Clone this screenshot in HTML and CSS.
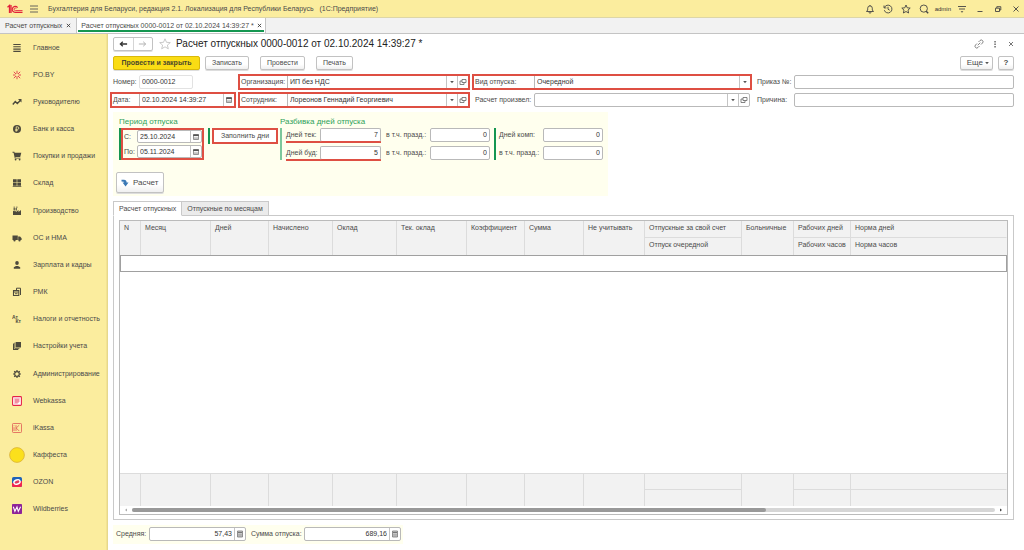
FILE: index.html
```html
<!DOCTYPE html>
<html lang="ru">
<head>
<meta charset="utf-8">
<title>Расчет отпускных</title>
<link rel="stylesheet" href="styles.css">
</head>
<body>
<svg class="sprite" aria-hidden="true">
  <symbol id="i-cal" viewBox="0 0 8 8"><path d="M1.500 2h5v4.500h-5z" fill="none" stroke="#777" stroke-width=".8"/><path d="M1.200 1.200h5.600v1.800H1.200z" fill="#555"/><path d="M2 4.300h4M2 5.500h4" stroke="#999" stroke-width=".6"/></symbol>
  <symbol id="i-open" viewBox="0 0 8 8"><path d="M3 1.500h4v3H3zM3 3H1v3.500h4v-2" fill="none" stroke="#666" stroke-width=".8"/></symbol>
  <symbol id="i-down" viewBox="0 0 8 8"><path d="M2.200 3h3.600L4 5.200z" fill="#555"/></symbol>
  <symbol id="i-calc" viewBox="0 0 8 8"><path d="M1.500 1h5v6h-5z" fill="#ccc" stroke="#777" stroke-width=".8"/><path d="M2 2.500h4" stroke="#777"/><path d="M2.500 4.400h3M2.500 5.800h3" stroke="#777" stroke-width=".7" stroke-dasharray=".8 .4"/></symbol>
</svg>

<header class="titlebar">
  <svg class="logo" viewBox="0 0 16 10" fill="none" stroke="#e2223a"><path d="M.5 3.200 2.500 1.500v7.500M4 1v8" stroke-width="1.300"/><path d="M10.600 3.600A3 3 0 1 0 8.500 8.400H15.500" stroke-width="1.200"/><path d="M9.300 4.400A1.300 1.300 0 1 0 8.500 6.600H15.500" stroke-width=".9"/></svg>
  <button class="icon-btn" aria-label="Меню"><svg viewBox="0 0 10 10" stroke="#555" stroke-width=".9"><path d="M1 2h8M1 5h8M1 8h8"/></svg></button>
  <span class="app-name">Бухгалтерия для Беларуси, редакция 2.1. Локализация для Республики Беларусь &nbsp; (1С:Предприятие)</span>
  <nav class="tools">
    <button class="icon-btn" aria-label="Уведомления"><svg viewBox="0 0 10 10" fill="none" stroke="#444" stroke-width=".9"><path d="M1.500 7.500h7L7.300 6V4.200a2.300 2.300 0 0 0-4.600 0V6zM5 1v1M4 8.200a1 1 0 0 0 2 0"/></svg></button>
    <button class="icon-btn" aria-label="История"><svg viewBox="0 0 10 10" fill="none" stroke="#444" stroke-width=".9"><path d="M1.400 3.600A3.900 3.900 0 1 1 1.300 6.200M1 1.500v2.400h2.400M5 2.800v2.400l1.700 1"/></svg></button>
    <button class="icon-btn" aria-label="Избранное"><svg viewBox="0 0 10 10" fill="none" stroke="#444" stroke-width=".9"><path d="m5 1 1.200 2.800 3 .3L7 6.100 7.600 9 5 7.500 2.400 9 3 6.100.8 4.100l3-.3z"/></svg></button>
    <button class="icon-btn" aria-label="Поиск"><svg viewBox="0 0 10 10" fill="none" stroke="#444" stroke-width=".9"><circle cx="4.800" cy="4.600" r="3.600"/><path d="m7.200 7.200 2 2" stroke-width="1.400"/></svg></button>
    <span class="user">admin</span>
    <button class="icon-btn" aria-label="Настройки"><svg viewBox="0 0 10 10" stroke="#444" stroke-width=".9"><path d="M1 2.500h8M2 5h6"/><path d="M3.600 7.200h2.800L5 8.700z" fill="#444" stroke="none"/></svg></button>
    <button class="icon-btn" aria-label="Свернуть"><svg viewBox="0 0 10 10" stroke="#444" stroke-width=".9"><path d="M2.500 7.500h5"/></svg></button>
    <button class="icon-btn" aria-label="Развернуть"><svg viewBox="0 0 10 10" fill="none" stroke="#444" stroke-width=".9"><path d="M2.500 4.200h4v3.300h-4zM3.800 4V2.700h4v3.300H6.500"/></svg></button>
    <button class="icon-btn" aria-label="Закрыть"><svg viewBox="0 0 10 10" stroke="#444" stroke-width=".9"><path d="m2.500 2.500 5 5M7.500 2.500l-5 5"/></svg></button>
  </nav>
</header>

<nav class="windows">
  <a class="window-tab" href="#">Расчет отпускных <svg viewBox="0 0 6 6"><path d="m1 1 4 4M5 1 1 5"/></svg></a>
  <a class="window-tab current" href="#">Расчет отпускных 0000-0012 от 02.10.2024 14:39:27 * <svg viewBox="0 0 6 6"><path d="m1 1 4 4M5 1 1 5"/></svg></a>
</nav>

<div class="workspace">
  <nav class="sidebar">
    <a href="#"><svg viewBox="0 0 10 10" stroke="#4d4a3c" stroke-width="1.100"><path d="M1.300 1.500h7.400M1.300 3.800h7.400M1.300 6.100h7.400M1.300 8.400h7.400"/></svg>Главное</a>
    <a href="#"><svg viewBox="0 0 10 10" stroke="#e0354a" stroke-width=".9"><path d="M5 .8v3M5 6.200v3M1 5h2.500M6.500 5H9M1.800 1.800l2.200 2.200M8.200 1.800 6 4M1.800 8.200 4 6M8.200 8.200 6 6"/></svg>PO.BY</a>
    <a href="#"><svg viewBox="0 0 10 10" fill="none" stroke="#4d4a3c" stroke-width="1.400"><path d="m.8 7.500 2.500-3 2 2 3-3"/><path d="M6 2h3.500v3.500z" fill="#4d4a3c" stroke="none"/></svg>Руководителю</a>
    <a href="#"><svg viewBox="0 0 10 10"><circle cx="5" cy="5" r="4" fill="#4d4a3c"/><path d="M4.200 7.700V2.800h1.300a1.300 1.300 0 0 1 0 2.600H3.300M3.300 6.600h2.400" fill="none" stroke="#fbed9e" stroke-width=".8"/></svg>Банк и касса</a>
    <a href="#"><svg viewBox="0 0 10 10" fill="#4d4a3c"><path d="M.5.800h1.800l.4 1h6.600L8.200 6H3.300l.2.700h5v.8H2.800L1.600 1.700H.5z"/><circle cx="3.600" cy="8.600" r=".9"/><circle cx="7.600" cy="8.600" r=".9"/></svg>Покупки и продажи</a>
    <a href="#"><svg viewBox="0 0 10 10" fill="#4d4a3c"><path d="M1 1.300h3.700v3.200H1zM5.300 1.300H9v3.200H5.300zM1 5.100h3.700v2.700H1zM5.300 5.100H9v2.700H5.300zM.7 8.200h8.600V9H.7z"/></svg>Склад</a>
    <a href="#"><svg viewBox="0 0 10 10" fill="#4d4a3c"><path d="M1 9V5l3 .2V6l2.500-2v2L9 4v5zM1.600 2h1.200v2.400H1.600zM3.600 2h1.200v2.400H3.600zM1.500.7h1.600v.7H1.500zM4 .7h1.600v.7H4z"/></svg>Производство</a>
    <a href="#"><svg viewBox="0 0 10 10" fill="#4d4a3c"><path d="M.5 2.500h5.300v4.600H.5zM6.200 3.500h1.900L9.600 5.200v1.900H6.200z"/><circle cx="2.500" cy="7.500" r="1.100"/><circle cx="7.500" cy="7.500" r="1.100"/></svg>ОС и НМА</a>
    <a href="#"><svg viewBox="0 0 10 10" fill="#4d4a3c"><ellipse cx="5" cy="3" rx="1.800" ry="2.100"/><path d="M1.800 8.800V7.200L4 6h2l2.200 1.200v1.600z"/></svg>Зарплата и кадры</a>
    <a href="#"><svg viewBox="0 0 10 10" fill="none" stroke="#4d4a3c"><path d="M1.500 3.500h5.300v5H1.500z" stroke-width="1.100"/><path d="M4.500 3V1.200h4V8M1.500 5h5" stroke-width="1"/><path d="M3 6.700h2.500" stroke-width=".9"/></svg>РМК</a>
    <a href="#"><svg viewBox="0 0 10 10"><text x="0" y="4.500" class="mini">Ат</text><text x="3.500" y="9" class="mini">Кт</text></svg>Налоги и отчетность</a>
    <a href="#"><svg viewBox="0 0 10 10" fill="#4d4a3c"><path d="M1 2.800 2 2.300V8h4.500l-.4 1H1zM2.400 1.800l.8-.4V7h4.400l-.4.800H2.400zM3.700 1H9v5.500H3.700z"/></svg>Настройки учета</a>
    <a href="#"><svg viewBox="0 0 10 10" fill="none" stroke="#4d4a3c"><circle cx="5" cy="5" r="2.300" stroke-width="1.200"/><path d="M5 1v1.500M5 7.500V9M1 5h1.500M7.500 5H9M2.200 2.200l1 1M6.800 6.800l1 1M7.800 2.200l-1 1M3.200 6.800l-1 1" stroke-width="1.200"/></svg>Администрирование</a>
    <a href="#"><svg viewBox="0 0 10 10" fill="none" stroke="#e52348"><rect x=".6" y=".6" width="8.800" height="8.800" rx=".8" fill="#fff" stroke-width="1.100"/><path d="M2.200 3h5.600M2.200 5h5.600M2.200 7h3.600M4 3v4M6 3v4" stroke-width=".6"/></svg>Webkassa</a>
    <a href="#"><svg viewBox="0 0 10 10" fill="none" stroke="#df5a55" stroke-width=".8"><rect x=".5" y=".5" width="9" height="9" rx=".8"/><path d="M2 4.200V8M2 2.400v.8M4 2.200V8M7.200 2.200 4.200 5l3 3"/></svg>iKassa</a>
    <a href="#"><svg class="round" viewBox="0 0 16 16"><circle cx="8" cy="8" r="7.400" fill="#fbe01c" stroke="#d9b13a" stroke-width=".8"/></svg>Каффеста</a>
    <a href="#"><svg viewBox="0 0 10 10"><rect width="10" height="10" rx="1.600" fill="#1f62b8"/><path d="M0 6 10 4v4.400A1.600 1.600 0 0 1 8.400 10H1.600A1.600 1.600 0 0 1 0 8.400z" fill="#f0254f"/><ellipse cx="5" cy="5" rx="3.200" ry="2.100" transform="rotate(-20 5 5)" fill="#e03c5f" stroke="#fff" stroke-width="1.400"/></svg>OZON</a>
    <a href="#"><svg viewBox="0 0 10 10"><rect width="10" height="10" rx=".8" fill="#8d2499"/><path d="m1.300 2.800 1.600 4.500L5 3l1.300 4.300 2.300-4.500" fill="none" stroke="#fff" stroke-width="1.100"/></svg>Wildberries</a>
  </nav>

  <main class="document">
    <div class="heading">
      <div class="history"><button aria-label="Назад"><svg viewBox="0 0 10 8"><path d="M9 4H1.500M4.200 1.500 1.500 4l2.700 2.500"/></svg></button><button class="off" aria-label="Вперед"><svg viewBox="0 0 10 8"><path d="M1 4h7.500M5.800 1.500 8.500 4 5.800 6.500"/></svg></button></div>
      <svg class="star" viewBox="0 0 12 12"><path d="m6 .8 1.500 3.500 3.800.3-2.900 2.500.9 3.700L6 8.800l-3.300 2 .9-3.700L.7 4.600l3.800-.3z"/></svg>
      <h1>Расчет отпускных 0000-0012 от 02.10.2024 14:39:27 *</h1>
      <div class="doc-tools">
        <button class="icon-btn" aria-label="Ссылка"><svg viewBox="0 0 10 10" fill="none" stroke="#777" stroke-width=".9"><path d="M4.500 3 6 1.500a1.700 1.700 0 0 1 2.500 2.500L7 5.500M5.500 7 4 8.500A1.700 1.700 0 0 1 1.500 6L3 4.500M3.700 6.300l2.600-2.600"/></svg></button>
        <button class="icon-btn" aria-label="Действия"><svg viewBox="0 0 10 10" fill="#555"><path d="M4.400 2h1.300v1.400H4.400zM4.400 4.500h1.300v1.400H4.400zM4.400 7h1.300v1.400H4.400z"/></svg></button>
        <button class="icon-btn" aria-label="Закрыть документ"><svg viewBox="0 0 10 10" stroke="#666" stroke-width=".9"><path d="m3 3 4 4M7 3 3 7"/></svg></button>
      </div>
    </div>

    <div class="commands">
      <button class="btn primary">Провести и закрыть</button>
      <button class="btn">Записать</button>
      <button class="btn spaced">Провести</button>
      <button class="btn spaced">Печать</button>
      <button class="btn more">Еще <svg class="glyph"><use href="#i-down"/></svg></button>
      <button class="btn help">?</button>
    </div>

    <div class="fields">
      <div class="field f1"><label for="num">Номер:</label><div class="box pale short"><input id="num" value="0000-0012"></div></div>
      <div class="field f2 marked"><label for="org">Организация:</label><div class="box"><select id="org"><option>ИП без НДС</option></select><span class="cell"><svg class="glyph"><use href="#i-down"/></svg></span><button class="cell" aria-label="Открыть"><svg class="glyph"><use href="#i-open"/></svg></button></div></div>
      <div class="field f3 marked"><label for="kind">Вид отпуска:</label><div class="box"><select id="kind"><option>Очередной</option></select><span class="cell"><svg class="glyph"><use href="#i-down"/></svg></span></div></div>
      <div class="field f4"><label for="order">Приказ №:</label><div class="box"><input id="order"></div></div>
      <div class="field f1 marked"><label for="date">Дата:</label><div class="box"><input id="date" value="02.10.2024 14:39:27"><button class="cell" aria-label="Календарь"><svg class="glyph"><use href="#i-cal"/></svg></button></div></div>
      <div class="field f2 marked"><label for="emp">Сотрудник:</label><div class="box"><select id="emp"><option>Лореонов Геннадий Георгиевич</option></select><span class="cell"><svg class="glyph"><use href="#i-down"/></svg></span><button class="cell" aria-label="Открыть"><svg class="glyph"><use href="#i-open"/></svg></button></div></div>
      <div class="field f3"><label for="by">Расчет произвел:</label><div class="box"><select id="by"><option></option></select><span class="cell"><svg class="glyph"><use href="#i-down"/></svg></span><button class="cell" aria-label="Открыть"><svg class="glyph"><use href="#i-open"/></svg></button></div></div>
      <div class="field f4"><label for="why">Причина:</label><div class="box"><input id="why"></div></div>
    </div>

    <section class="period">
      <div class="groups">
        <div class="group g-period">
          <h2>Период отпуска</h2>
          <div class="bar">
            <div class="dates">
              <div class="line"><label for="from">С:</label><div class="box"><input id="from" value="25.10.2024"><button class="cell" aria-label="Календарь"><svg class="glyph"><use href="#i-cal"/></svg></button></div></div>
              <div class="line"><label for="to">По:</label><div class="box"><input id="to" value="05.11.2024"><button class="cell" aria-label="Календарь"><svg class="glyph"><use href="#i-cal"/></svg></button></div></div>
            </div>
          </div>
        </div>
        <div class="group g-fill"><div class="bar"><button class="fill">Заполнить дни</button></div></div>
        <div class="group g-split">
          <h2>Разбивка дней отпуска</h2>
          <div class="bar light days">
            <div class="line n1 under"><label for="d1">Дней тек:</label><div class="box"><input class="num" id="d1" value="7"></div></div>
            <div class="line n2"><label for="d2">в т.ч. празд.:</label><div class="box"><input class="num" id="d2" value="0"></div></div>
            <div class="line n1 under"><label for="d3">Дней буд:</label><div class="box"><input class="num" id="d3" value="5"></div></div>
            <div class="line n2"><label for="d4">в т.ч. празд.:</label><div class="box"><input class="num" id="d4" value="0"></div></div>
          </div>
        </div>
        <div class="group g-comp">
          <div class="bar">
            <div class="line n2"><label for="d5">Дней комп:</label><div class="box"><input class="num" id="d5" value="0"></div></div>
            <div class="line n2"><label for="d6">в т.ч. празд.:</label><div class="box"><input class="num" id="d6" value="0"></div></div>
          </div>
        </div>
      </div>
      <button class="btn calc"><svg viewBox="0 0 8 8"><path d="M.5.800H3Q5.600.8 5.600 3.500H7.500L4.600 7.500 1.500 3.500H3.300Q3.300 2.400.5 2.400z" fill="#3a78b5"/></svg>Расчет</button>
    </section>

    <div class="tabs" role="tablist"><button class="tab active" role="tab">Расчет отпускных</button><button class="tab" role="tab">Отпускные по месяцам</button></div>
    <section class="pane">
      <div class="sheet">
        <table>
          <colgroup><col class="w-n"><col class="w-month"><col class="w-days"><col class="w-acc"><col class="w-acc"><col class="w-month"><col class="w-days"><col class="w-sum"><col class="w-skip"><col class="w-vac"><col class="w-sick"><col class="w-work"><col></colgroup>
          <thead>
            <tr><th rowspan="2">N</th><th rowspan="2">Месяц</th><th rowspan="2">Дней</th><th rowspan="2">Начислено</th><th rowspan="2">Оклад</th><th rowspan="2">Тек. оклад</th><th rowspan="2">Коэффициент</th><th rowspan="2">Сумма</th><th rowspan="2">Не учитывать</th><th>Отпускные за свой счет</th><th rowspan="2">Больничные</th><th>Рабочих дней</th><th>Норма дней</th></tr>
            <tr><th>Отпуск очередной</th><th>Рабочих часов</th><th>Норма часов</th></tr>
          </thead>
          <tbody><tr class="active-row"><td colspan="13"></td></tr></tbody>
        </table>
        <div class="empty"></div>
        <table class="totals">
          <colgroup><col class="w-n"><col class="w-month"><col class="w-days"><col class="w-acc"><col class="w-acc"><col class="w-month"><col class="w-days"><col class="w-sum"><col class="w-skip"><col class="w-vac"><col class="w-sick"><col class="w-work"><col></colgroup>
          <tbody>
            <tr><td rowspan="2"></td><td rowspan="2"></td><td rowspan="2"></td><td rowspan="2"></td><td rowspan="2"></td><td rowspan="2"></td><td rowspan="2"></td><td rowspan="2"></td><td rowspan="2"></td><td></td><td rowspan="2"></td><td></td><td></td></tr>
            <tr><td></td><td></td><td></td></tr>
          </tbody>
        </table>
        <div class="scroll"><svg viewBox="0 0 4 4" fill="#aaa"><path d="M3 .5v3L1 2z"/></svg><div class="track"><div class="thumb"></div></div><svg viewBox="0 0 4 4" fill="#444"><path d="M1 .5v3L3 2z"/></svg></div>
      </div>
    </section>

    <footer class="sums">
      <label for="avg">Средняя:</label><div class="box"><input class="num" id="avg" value="57,43"><button class="cell" aria-label="Калькулятор"><svg class="glyph"><use href="#i-calc"/></svg></button></div>
      <label for="total">Сумма отпуска:</label><div class="box"><input class="num" id="total" value="689,16"><button class="cell" aria-label="Калькулятор"><svg class="glyph"><use href="#i-calc"/></svg></button></div>
    </footer>
  </main>
</div>
</body>
</html>
```

FILE: styles.css
```css
* { box-sizing: border-box; }
html, body { height: 100%; }
body { margin: 0; display: flex; flex-direction: column; background: #fff; color: #4a4a4a; font: 7px/10px "Liberation Sans", Arial, sans-serif; }
button, input, select { font: inherit; color: inherit; margin: 0; padding: 0; border: 0; background: none; outline: 0; }
a { color: inherit; text-decoration: none; }
h1, h2 { margin: 0; font-weight: normal; }
.sprite { display: none; }
.glyph { width: 8px; height: 8px; display: block; }
.icon-btn { width: 10px; height: 10px; }
.icon-btn svg { display: block; width: 10px; height: 10px; }

.titlebar { flex: none; height: 17px; display: flex; align-items: center; padding: 0 3px 0 7px; background: #fbed9e; }
.logo { width: 16px; height: 10px; margin-right: 6px; }
.app-name { margin-left: 9px; flex: 1; white-space: nowrap; }
.tools { display: flex; align-items: center; gap: 8px; }
.user { font-size: 6px; margin: 0 -2px; color: #333; }

.windows { flex: none; height: 17px; display: flex; background: #f2f2f2; border-top: 1px solid #ddd6a8; border-bottom: 1px solid #c4c4c4; }
.window-tab { display: flex; align-items: center; gap: 4px; padding: 0 5px; border-right: 1px solid #c4c4c4; white-space: nowrap; }
.window-tab svg { width: 5px; height: 5px; stroke: #333; stroke-width: 1; }
.window-tab.current { gap: 3px; padding: 0 3px 0 4px; background: linear-gradient(#149650, #149650) 1px 12px / calc(100% - 2px) 2px no-repeat #fff; }

.workspace { flex: 1; display: flex; min-height: 0; }
.sidebar { flex: none; width: 108px; padding-bottom: 27px; display: grid; grid-auto-rows: 1fr; background: #fbed9e; border-right: 1px solid #e6d88c; box-shadow: inset -1px 0 #f3e394; }
.sidebar a { display: flex; align-items: center; gap: 11px; padding-left: 12px; white-space: nowrap; }
.sidebar svg { width: 10px; height: 10px; flex: none; }
.sidebar .round { width: 16px; height: 16px; margin: 0 -3px; }
.mini { font: bold 5px "Liberation Sans", Arial, sans-serif; fill: #4d4a3c; }

.document { flex: 1; min-width: 0; padding: 3px 8px 6px 2px; display: flex; flex-direction: column; }
.heading { display: flex; align-items: center; height: 14px; padding-left: 3px; }
.history { display: flex; width: 40px; height: 14px; border: 1px solid #c2c2c2; border-radius: 2px; box-shadow: 0 1px #ddd; }
.history button { flex: 1; display: grid; place-items: center; }
.history button + button { border-left: 1px solid #d5d5d5; }
.history svg { width: 9px; height: 8px; fill: none; stroke: #333; stroke-width: 1.4; }
.history .off svg { stroke: #aaa; stroke-width: 1; }
.star { width: 12px; height: 12px; margin: 0 5px 0 6px; fill: none; stroke: #bbb; stroke-width: .8; }
h1 { flex: 1; font-size: 10px; line-height: 14px; color: #222; white-space: nowrap; }
.doc-tools { display: flex; gap: 6px; }

.commands { display: flex; margin: 5px 2px 4px 3px; height: 14px; gap: 5px; }
.btn { border: 1px solid #c2c2c2; border-radius: 2px; background: linear-gradient(#fff 60%, #f0f0f0); box-shadow: 0 1px #ddd; line-height: 12px; padding: 0 6px; white-space: nowrap; }
.primary { width: 87px; background: #fadc14; border-color: #d9b90a; color: #4d492c; font-weight: bold; padding: 0; }
.spaced { margin-left: 6px; }
.more { display: flex; align-items: center; margin-left: auto; font-size: 8px; padding: 0 1px 0 6px; }
.help { font-size: 8px; font-weight: bold; width: 16px; padding: 0; }

.fields { display: grid; grid-template-columns: 126px 232fr 280fr 262fr; gap: 2px; }
.field { display: flex; align-items: stretch; height: 16px; border: 2px solid transparent; padding-left: 1px; min-width: 0; }
.field label { flex: none; line-height: 12px; white-space: nowrap; }
.f1 label { width: 26px; }
.f2 label { width: 46px; }
.f3 label { width: 59px; }
.f4 label { width: 37px; }
.box { flex: 1; min-width: 0; display: flex; height: 14px; border: 1px solid #b9b9b9; border-radius: 2px; background: #fff; }
.field .box { margin: -1px 0; }
.field.marked { border-color: #de4f43; }
.field.marked .box { height: 12px; margin: 0; border-width: 0 0 0 1px; border-radius: 0; }
.box input, .box select { flex: 1; min-width: 0; width: 0; padding: 0 2px; appearance: none; color: #333; }
.box.pale { border-color: #e2e2e2; }
.field .box.short { flex: none; width: 54px; }
.cell { flex: none; width: 11px; display: grid; place-items: center; border-left: 1px solid #c4c4c4; pointer-events: none; }
button.cell { border-left: 1px solid #c4c4c4; }
.box .num { text-align: right; }

.period { align-self: flex-start; margin: 4px 0 0 3px; width: 495px; height: 84px; padding: 4px 4px 0 3px; background: #ffffee; display: flex; flex-direction: column; align-items: flex-start; gap: 12px; }
.groups { display: flex; align-items: flex-end; gap: 4px; padding-left: 3px; }
h2 { font-size: 8px; line-height: 12px; color: #2f9f5b; white-space: nowrap; }
.bar { border-left: 2px solid #149650; min-height: 32px; }
.bar.light { border-color: #7cc79b; }
.line { display: flex; align-items: center; height: 14px; white-space: nowrap; }
.dates { width: 83px; height: 32px; border: 2px solid #de4f43; padding-left: 1px; display: flex; flex-direction: column; justify-content: space-between; }
.dates .line { height: 13px; }
.dates label { width: 13px; }
.dates .box { height: 13px; }
.g-fill { align-self: flex-start; padding-top: 12px; }
.g-fill .bar { min-height: 0; height: 16px; padding-left: 2px; }
.fill { display: block; width: 66px; height: 16px; border: 2px solid #de4f43; background: #fff; line-height: 12px; }
.g-split { margin-left: -2px; }
.days { display: grid; grid-template-columns: 95px 104px; column-gap: 5px; row-gap: 4px; padding-left: 4px; }
.line .box { flex: 1; }
.n1 label { width: 34px; }
.n2 label { width: 44px; }
.under { box-shadow: 0 1px #de4f43, inset 0 -1px #de4f43; }
.n1.under .box { border-bottom-color: #de4f43; }
.g-comp .bar { width: 109px; padding-left: 3px; display: grid; row-gap: 4px; }
.calc { display: flex; align-items: center; gap: 4px; height: 21px; width: 48px; padding: 0 4px; font-size: 8px; }
.calc svg { width: 8px; height: 8px; }

.tabs { display: flex; margin: 5px 0 -1px 3px; }
.tab { height: 15px; padding: 0 5px; border: 1px solid #c9c9c9; background: #ebebeb; position: relative; }
.tab + .tab { border-left: 0; }
.tab.active { background: #fff; border-bottom-color: #fff; }
.pane { flex: 1; min-height: 0; margin: 0 2px 0 3px; border: 1px solid #c9c9c9; padding: 4px 5px; display: flex; }
.sheet { flex: 1; min-width: 0; border: 1px solid #bbb; display: flex; flex-direction: column; }
table { flex: none; width: 100%; table-layout: fixed; border-collapse: separate; border-spacing: 0; }
th, .totals td { height: 17px; padding: 2px 4px; background: #f2f2f2; border-right: 1px solid #dcdcdc; border-bottom: 1px solid #dcdcdc; text-align: left; vertical-align: top; font-weight: normal; white-space: nowrap; }
th:last-child, .totals td:last-child { border-right-color: #f2f2f2; }
thead th[rowspan], thead tr + tr th { border-bottom: 0; }
thead tr + tr th:nth-child(2), .totals tr + tr td:nth-child(2) { border-right-color: #dcdcdc; }
.w-n { width: 21px; }
.w-month { width: 70px; }
.w-days { width: 58px; }
.w-acc { width: 64px; }
.w-sum { width: 59px; }
.w-skip { width: 61px; }
.w-vac { width: 97px; }
.w-sick { width: 52px; }
.w-work { width: 57px; }
.active-row td { height: 17px; padding: 0; border: 1px solid #a0a0a0; }
.empty { flex: 1; }
.totals { border-top: 1px solid #dcdcdc; }
.totals td { height: 16px; padding: 0; }
.totals td[rowspan], .totals tr + tr td { border-bottom: 0; }
.scroll { flex: none; height: 8px; display: flex; align-items: center; gap: 4px; padding: 0 4px; }
.scroll svg { width: 4px; height: 4px; }
.track { flex: 1; height: 4px; border-radius: 2px; background: #d6d6d6; }
.thumb { width: 73.5%; height: 4px; border-radius: 2px; background: #999; }

.sums { align-self: flex-start; margin: 5px 0 0 3px; padding: 2px 2px 3px 3px; display: flex; align-items: center; background: #ffffee; white-space: nowrap; }
.sums .box { flex: none; width: 97px; }
.sums label { width: 33px; }
.sums .box + label { width: 58px; padding-left: 5px; }
```
